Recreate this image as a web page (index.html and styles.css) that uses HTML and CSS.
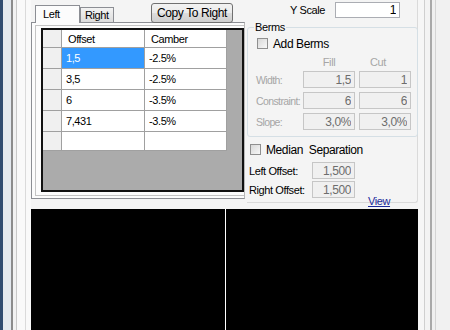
FILE: index.html
```html
<!DOCTYPE html>
<html lang="en">
<head>
    <meta charset="UTF-8">
    <title>Section Editor</title>
    <link rel="stylesheet" href="styles.css">
</head>
<body>
<div class="window">
    <div class="edge-left"></div>
    <div class="client">
        <div class="upper">
            <div class="tabs">
                <div class="tab-strip">
                    <span class="tab tab-on">Left</span>
                    <span class="tab">Right</span>
                    <button class="btn" type="button">Copy To Right</button>
                </div>
                <div class="tab-page">
                    <div class="inner">
                        <div class="grid">
                            <table class="cells">
                                <tr class="head">
                                    <td class="rh"></td><td>Offset</td><td>Camber</td>
                                </tr>
                                <tr><td class="rh"></td><td class="sel">1,5</td><td>-2.5%</td></tr>
                                <tr><td class="rh"></td><td>3,5</td><td>-2.5%</td></tr>
                                <tr><td class="rh"></td><td>6</td><td>-3.5%</td></tr>
                                <tr><td class="rh"></td><td>7,431</td><td>-3.5%</td></tr>
                                <tr class="new"><td class="rh"></td><td></td><td></td></tr>
                            </table>
                        </div>
                    </div>
                </div>
            </div>

            <div class="side">
                <div class="scale-row">
                    <label for="yScale">Y Scale</label>
                    <input type="text" id="yScale" class="field" value="1">
                </div>

                <fieldset class="berms">
                    <legend>Berms</legend>
                    <div class="check-row">
                        <span class="box"></span><span>Add Berms</span>
                    </div>
                    <div class="berm-grid">
                        <span></span><span class="col-fill">Fill</span><span class="col-cut">Cut</span>
                        <span class="dim">Width:</span>
                        <input type="text" class="field off" value="1,5" disabled>
                        <input type="text" class="field off" value="1" disabled>
                        <span class="dim">Constraint:</span>
                        <input type="text" class="field off" value="6" disabled>
                        <input type="text" class="field off" value="6" disabled>
                        <span class="dim">Slope:</span>
                        <input type="text" class="field off" value="3,0%" disabled>
                        <input type="text" class="field off" value="3,0%" disabled>
                    </div>
                </fieldset>

                <div class="check-row median">
                    <span class="box"></span><span>Median&nbsp;&nbsp;Separation</span>
                </div>
                <div class="off-row">
                    <span>Left Offset:</span>
                    <input type="text" class="field off" value="1,500" disabled>
                </div>
                <div class="off-row">
                    <span>Right Offset:</span>
                    <input type="text" class="field off" value="1,500" disabled>
                </div>
                <div class="view-row"><a href="#">View</a></div>
            </div>
        </div>

        <div class="canvas">
            <div class="view left-view"></div>
            <div class="view right-view"></div>
        </div>
    </div>
    <div class="edge-right"></div>
</div>
</body>
</html>
```

FILE: styles.css
```css
body{
margin:0;
background:#f4f4f4;
font-family:"Liberation Sans", Arial, sans-serif;
font-size:11px;
letter-spacing:-0.4px;
color:#000;
}

.window{
display:flex;
width:450px;
height:330px;
overflow:hidden;
}

.edge-left{
flex:none;
width:31px;
background:linear-gradient(to right, #2f4b70 0 3px, #e3e8ee 3px 11px, #8c8c8c 11px 13px, #f2f2f2 13px 16px, #c9c9c9 16px 17px, #f9f9f9 17px 25px, #dadada 25px 26px, #f9f9f9 26px);
}

.edge-right{
flex:none;
width:32px;
background:linear-gradient(to right, #f6f6f6 0 6px, #cfcfcf 6px 7px, #f3f3f3 7px 12px, #a9a9a9 12px 14px, #f0f0f0 14px 17px, #d4d4d4 17px 18px, #f1f1f1 18px);
}

.client{
flex:none;
width:387px;
display:flex;
flex-direction:column;
}

.upper{
display:flex;
height:209px;
flex:none;
}

/* tab control */
.tabs{
flex:none;
width:214px;
}

.tab-strip{
display:flex;
align-items:flex-end;
height:22px;
padding-left:4px;
}

.tab{
height:14px;
line-height:14px;
padding:0 4px;
border:1px solid #8c8e94;
border-bottom:none;
background:linear-gradient(#f3f3f3, #dcdcdc);
}

.tab-on{
width:32px;
height:17px;
line-height:17px;
padding-left:7px;
background:#fcfcfc;
margin-bottom:-1px;
position:relative;
z-index:1;
}

.btn{
align-self:flex-start;
margin:3px 12px 0 auto;
width:82px;
height:20px;
padding:0;
font-family:inherit;
font-size:12px;
letter-spacing:-0.4px;
border:1px solid #707070;
border-radius:3px;
background:linear-gradient(#f2f2f2, #ebebeb 50%, #dddddd 50%, #cfcfcf);
}

.tab-page{
height:175px;
border:1px solid #8c8e94;
border-right-color:#b8b8b8;
background:#fcfcfc;
}

.inner{
margin:2px 0 0 3px;
height:169px;
border:1px solid #c4c4c4;
border-right:none;
}

.grid{
margin:2px 0 0 5px;
width:199px;
height:160px;
border:2px solid #111;
background:#ababab;
}

.cells{
border-collapse:collapse;
width:184px;
table-layout:fixed;
}

.cells td{
height:20px;
padding:0 0 0 4px;
border:1px solid #a0a0a0;
background:#fff;
white-space:nowrap;
}

.cells td:nth-child(1){ width:12px; }
.cells td:nth-child(2){ width:76px; }
.cells tr:first-child td{ border-top:none; }
.cells td:first-child{ border-left:none; }

.cells .head td{
height:17px;
padding-left:6px;
}

.cells .rh{
background:#f0f0f0;
}

.cells .sel{
background:#3399ff;
color:#fff;
}

.cells .new td{
height:18px;
}

/* right side */
.side{
flex:none;
width:170px;
margin-left:2px;
height:202px;
border-right:1px solid #dadada;
border-bottom:1px solid #dadada;
border-bottom-right-radius:3px;
}

.scale-row{
display:flex;
align-items:center;
justify-content:flex-end;
gap:10px;
height:20px;
padding-right:17px;
}

.field{
box-sizing:border-box;
height:17px;
padding:0 3px 0 0;
border:1px solid #abadb3;
background:#fff;
font-family:inherit;
font-size:12px;
letter-spacing:-0.4px;
text-align:right;
color:#000;
}

.scale-row .field{
width:65px;
height:16px;
}

.field.off{
background:#f0f0f0;
border-color:#c6c6c6;
color:#6d6d6d;
}

.berms{
margin:0 2px 0 0;
padding:0 6px 6px 8px;
border:1px solid #d5dfe5;
border-radius:3px;
}

.berms legend{
margin-left:-2px;
padding:0 1px;
line-height:14px;
}

.check-row{
display:flex;
align-items:center;
gap:5px;
height:13px;
margin:3px 0 0 1px;
font-size:12px;
}

.box{
box-sizing:border-box;
width:11px;
height:11px;
border:1px solid #8f8f8f;
background:linear-gradient(135deg, #d8d8d8, #f8f8f8);
}

.berm-grid{
display:grid;
grid-template-columns:43px 52px 52px;
grid-template-rows:11px 17px 17px 17px;
column-gap:4px;
row-gap:4px;
margin-top:6px;
align-items:center;
}

.dim, .col-fill, .col-cut{
color:#a6a6a6;
white-space:nowrap;
}

.dim{
font-size:10.5px;
letter-spacing:-0.6px;
}

.col-fill{
text-align:center;
}

.col-cut{
padding-left:11px;
}

.berm-grid .field{
width:52px;
}

.median{
margin:6px 0 0 3px;
}

.off-row{
display:flex;
align-items:center;
height:17px;
margin:6px 0 0 2px;
}

.off-row + .off-row{
margin-top:2px;
}

.off-row span{
width:63px;
}

.off-row .field{
width:43px;
}

.view-row{
margin-top:-3px;
padding-left:121px;
line-height:12px;
}

.view-row a{
color:#1c2a9c;
}

/* drawing area */
.canvas{
flex:1;
display:flex;
gap:1px;
background:#fff;
}

.view{
background:#000;
}

.left-view{
width:194px;
}

.right-view{
flex:1;
}
```
